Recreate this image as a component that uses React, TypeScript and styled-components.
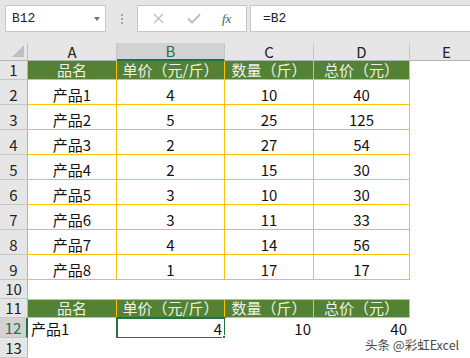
import React from "react";
import styled, { createGlobalStyle, css } from "styled-components";

const GlobalStyle = createGlobalStyle`
  html, body {
    margin: 0;
    padding: 0;
    width: 470px;
    height: 358px;
    overflow: hidden;
    background: #ffffff;
  }
`;

const GREEN = "#217346";
const FILL = "#548235";
const GOLD = "#ffc000";

type Kind = "head" | "data" | "plain";
type Align = "left" | "center" | "right";

interface Row {
  n: number;
  h: number;
  kind: Kind;
  cells: string[];
  align?: Align[];
}

const header = ["品名", "单价（元/斤）", "数量（斤）", "总价（元）"];

const rows: Row[] = [
  { n: 1, h: 19, kind: "head", cells: header },
  { n: 2, h: 25, kind: "data", cells: ["产品1", "4", "10", "40"] },
  { n: 3, h: 25, kind: "data", cells: ["产品2", "5", "25", "125"] },
  { n: 4, h: 25, kind: "data", cells: ["产品3", "2", "27", "54"] },
  { n: 5, h: 25, kind: "data", cells: ["产品4", "2", "15", "30"] },
  { n: 6, h: 25, kind: "data", cells: ["产品5", "3", "10", "30"] },
  { n: 7, h: 25, kind: "data", cells: ["产品6", "3", "11", "33"] },
  { n: 8, h: 25, kind: "data", cells: ["产品7", "4", "14", "56"] },
  { n: 9, h: 25, kind: "data", cells: ["产品8", "1", "17", "17"] },
  { n: 10, h: 19, kind: "plain", cells: ["", "", "", ""] },
  { n: 11, h: 19, kind: "head", cells: header },
  {
    n: 12,
    h: 20,
    kind: "plain",
    cells: ["产品1", "4", "10", "40"],
    align: ["left", "right", "right", "right"],
  },
  { n: 13, h: 20, kind: "plain", cells: ["", "", "", ""] },
];

const columns = ["A", "B", "C", "D", "E"];
const selCol = 1;
const selRow = 12;

const Page = styled.div`
  width: 470px;
  height: 358px;
  position: relative;
  overflow: hidden;
  background: #e6e6e6;
  font-family: "Noto Sans CJK SC", "Noto Sans", sans-serif;
`;

const Toolbar = styled.div`
  height: 43px;
  display: flex;
  align-items: flex-start;
  padding: 5px 0 0 5px;
  box-sizing: border-box;
`;

const NameBox = styled.div`
  width: 101px;
  height: 27px;
  box-sizing: border-box;
  background: #fff;
  border: 1px solid #c6c6c6;
  display: flex;
  align-items: center;
  justify-content: space-between;
  padding: 0 5px 0 6px;
  font-family: "Liberation Mono", monospace;
  font-size: 13px;
  color: #222;
`;

const Caret = styled.span`
  width: 0;
  height: 0;
  border-left: 3.5px solid transparent;
  border-right: 3.5px solid transparent;
  border-top: 4px solid #707070;
  margin-top: 1px;
`;

const Grip = styled.div`
  width: 31px;
  height: 27px;
  display: flex;
  flex-direction: column;
  align-items: center;
  justify-content: center;
  gap: 2px;

  span {
    width: 2px;
    height: 2px;
    background: #a8a8a8;
  }
`;

const FuncBox = styled.div`
  width: 110px;
  height: 27px;
  box-sizing: border-box;
  background: #fff;
  border: 1px solid #c6c6c6;
  display: flex;
  align-items: center;
  padding-left: 15px;
  gap: 23px;
`;

const Fx = styled.span`
  font-family: "Liberation Serif", serif;
  font-style: italic;
  font-size: 13px;
  color: #555;
  margin-left: -2px;
`;

const FormulaBox = styled.div`
  flex: 1;
  height: 27px;
  margin-left: 3px;
  box-sizing: border-box;
  background: #fff;
  border: 1px solid #c6c6c6;
  border-right: none;
  display: flex;
  align-items: center;
  padding-left: 12px;
  font-family: "Liberation Mono", monospace;
  font-size: 13px;
  color: #222;
`;

const Sheet = styled.div<{ $rows: string }>`
  display: grid;
  grid-template-columns: 28px 89px 108px 89px 96px 74px;
  grid-template-rows: 18px ${(p) => p.$rows};
  width: 484px;
  background: #fff;
`;

const Corner = styled.div`
  background: #e6e6e6;
  border-right: 1px solid #c0c0c0;
  border-bottom: 1px solid #b4b4b4;
  box-sizing: border-box;
  position: relative;

  &::after {
    content: "";
    position: absolute;
    right: 3px;
    bottom: 3px;
    border-left: 12px solid transparent;
    border-bottom: 12px solid #bfbfbf;
  }
`;

const ColHead = styled.div<{ $active?: boolean }>`
  box-sizing: border-box;
  background: ${(p) => (p.$active ? "#d2d2d2" : "#e6e6e6")};
  border-right: 1px solid #c6c6c6;
  border-bottom: ${(p) => (p.$active ? `2px solid ${GREEN}` : "1px solid #b4b4b4")};
  color: ${(p) => (p.$active ? GREEN : "#222")};
  font-size: 15px;
  display: flex;
  align-items: center;
  justify-content: center;
  line-height: 16px;
`;

const RowHead = styled.div<{ $active?: boolean }>`
  box-sizing: border-box;
  background: ${(p) => (p.$active ? "#d2d2d2" : "#e6e6e6")};
  border-right: ${(p) => (p.$active ? `2px solid ${GREEN}` : "1px solid #b4b4b4")};
  border-bottom: 1px solid #c6c6c6;
  color: ${(p) => (p.$active ? GREEN : "#222")};
  font-size: 15px;
  display: flex;
  align-items: flex-end;
  justify-content: center;
  line-height: 18px;
`;

const Cell = styled.div<{ $kind: Kind; $align: Align; $selected?: boolean; $edge?: boolean }>`
  box-sizing: border-box;
  position: relative;
  display: flex;
  align-items: flex-end;
  justify-content: ${(p) =>
    p.$align === "left" ? "flex-start" : p.$align === "right" ? "flex-end" : "center"};
  padding: 0 3px;
  line-height: 18px;
  font-size: 15px;
  white-space: nowrap;
  color: #111;
  background: #fff;

  ${(p) =>
    p.$kind === "head" &&
    css`
      background: ${FILL};
      color: #eef2ea;
      border-right: 1px solid ${GOLD};
      border-bottom: 1px solid ${GOLD};
    `}

  ${(p) =>
    p.$kind === "data" &&
    css`
      border-right: 1px solid ${GOLD};
      border-bottom: 1px solid ${GOLD};
    `}

  ${(p) =>
    p.$edge &&
    css`
      border-top: 1px solid ${GOLD};
    `}

  ${(p) =>
    p.$selected &&
    css`
      &::before {
        content: "";
        position: absolute;
        left: -1px;
        top: -1px;
        right: -1px;
        bottom: -1px;
        border: 2px solid ${GREEN};
      }
      &::after {
        content: "";
        position: absolute;
        right: -4px;
        bottom: -4px;
        width: 5px;
        height: 5px;
        background: ${GREEN};
        border: 1px solid #fff;
      }
    `}
`;

const Watermark = styled.div`
  position: absolute;
  left: 365px;
  top: 338px;
  font-size: 12.5px;
  line-height: 13px;
  color: #4a4a4a;
  text-shadow: 0 0 2px #fff, 0 0 2px #fff;
`;

const CrossIcon = () => (
  <svg width="11" height="11" viewBox="0 0 11 11">
    <path d="M1 1 L10 10 M10 1 L1 10" stroke="#bdbdbd" strokeWidth="1.3" fill="none" />
  </svg>
);

const CheckIcon = () => (
  <svg width="14" height="11" viewBox="0 0 14 11">
    <path d="M1 5.5 L5 9.5 L13 1.5" stroke="#bdbdbd" strokeWidth="2" fill="none" />
  </svg>
);

export default function App() {
  const rowTemplate = rows.map((r) => `${r.h}px`).join(" ");

  return (
    <Page>
      <GlobalStyle />
      <Toolbar>
        <NameBox>
          B12
          <Caret />
        </NameBox>
        <Grip>
          <span />
          <span />
          <span />
        </Grip>
        <FuncBox>
          <CrossIcon />
          <CheckIcon />
          <Fx>fx</Fx>
        </FuncBox>
        <FormulaBox>=B2</FormulaBox>
      </Toolbar>

      <Sheet $rows={rowTemplate}>
        <Corner />
        {columns.map((c, i) => (
          <ColHead key={c} $active={i === selCol}>
            {c}
          </ColHead>
        ))}

        {rows.map((r) => (
          <React.Fragment key={r.n}>
            <RowHead $active={r.n === selRow}>{r.n}</RowHead>
            {r.cells.map((v, i) => (
              <Cell
                key={i}
                $kind={r.kind}
                $align={r.align ? r.align[i] : "center"}
                $edge={r.n === 11}
                $selected={r.n === selRow && i === selCol}
              >
                {v}
              </Cell>
            ))}
            <Cell $kind="plain" $align="center" />
          </React.Fragment>
        ))}
      </Sheet>

      <Watermark>头条 @彩虹Excel</Watermark>
    </Page>
  );
}
